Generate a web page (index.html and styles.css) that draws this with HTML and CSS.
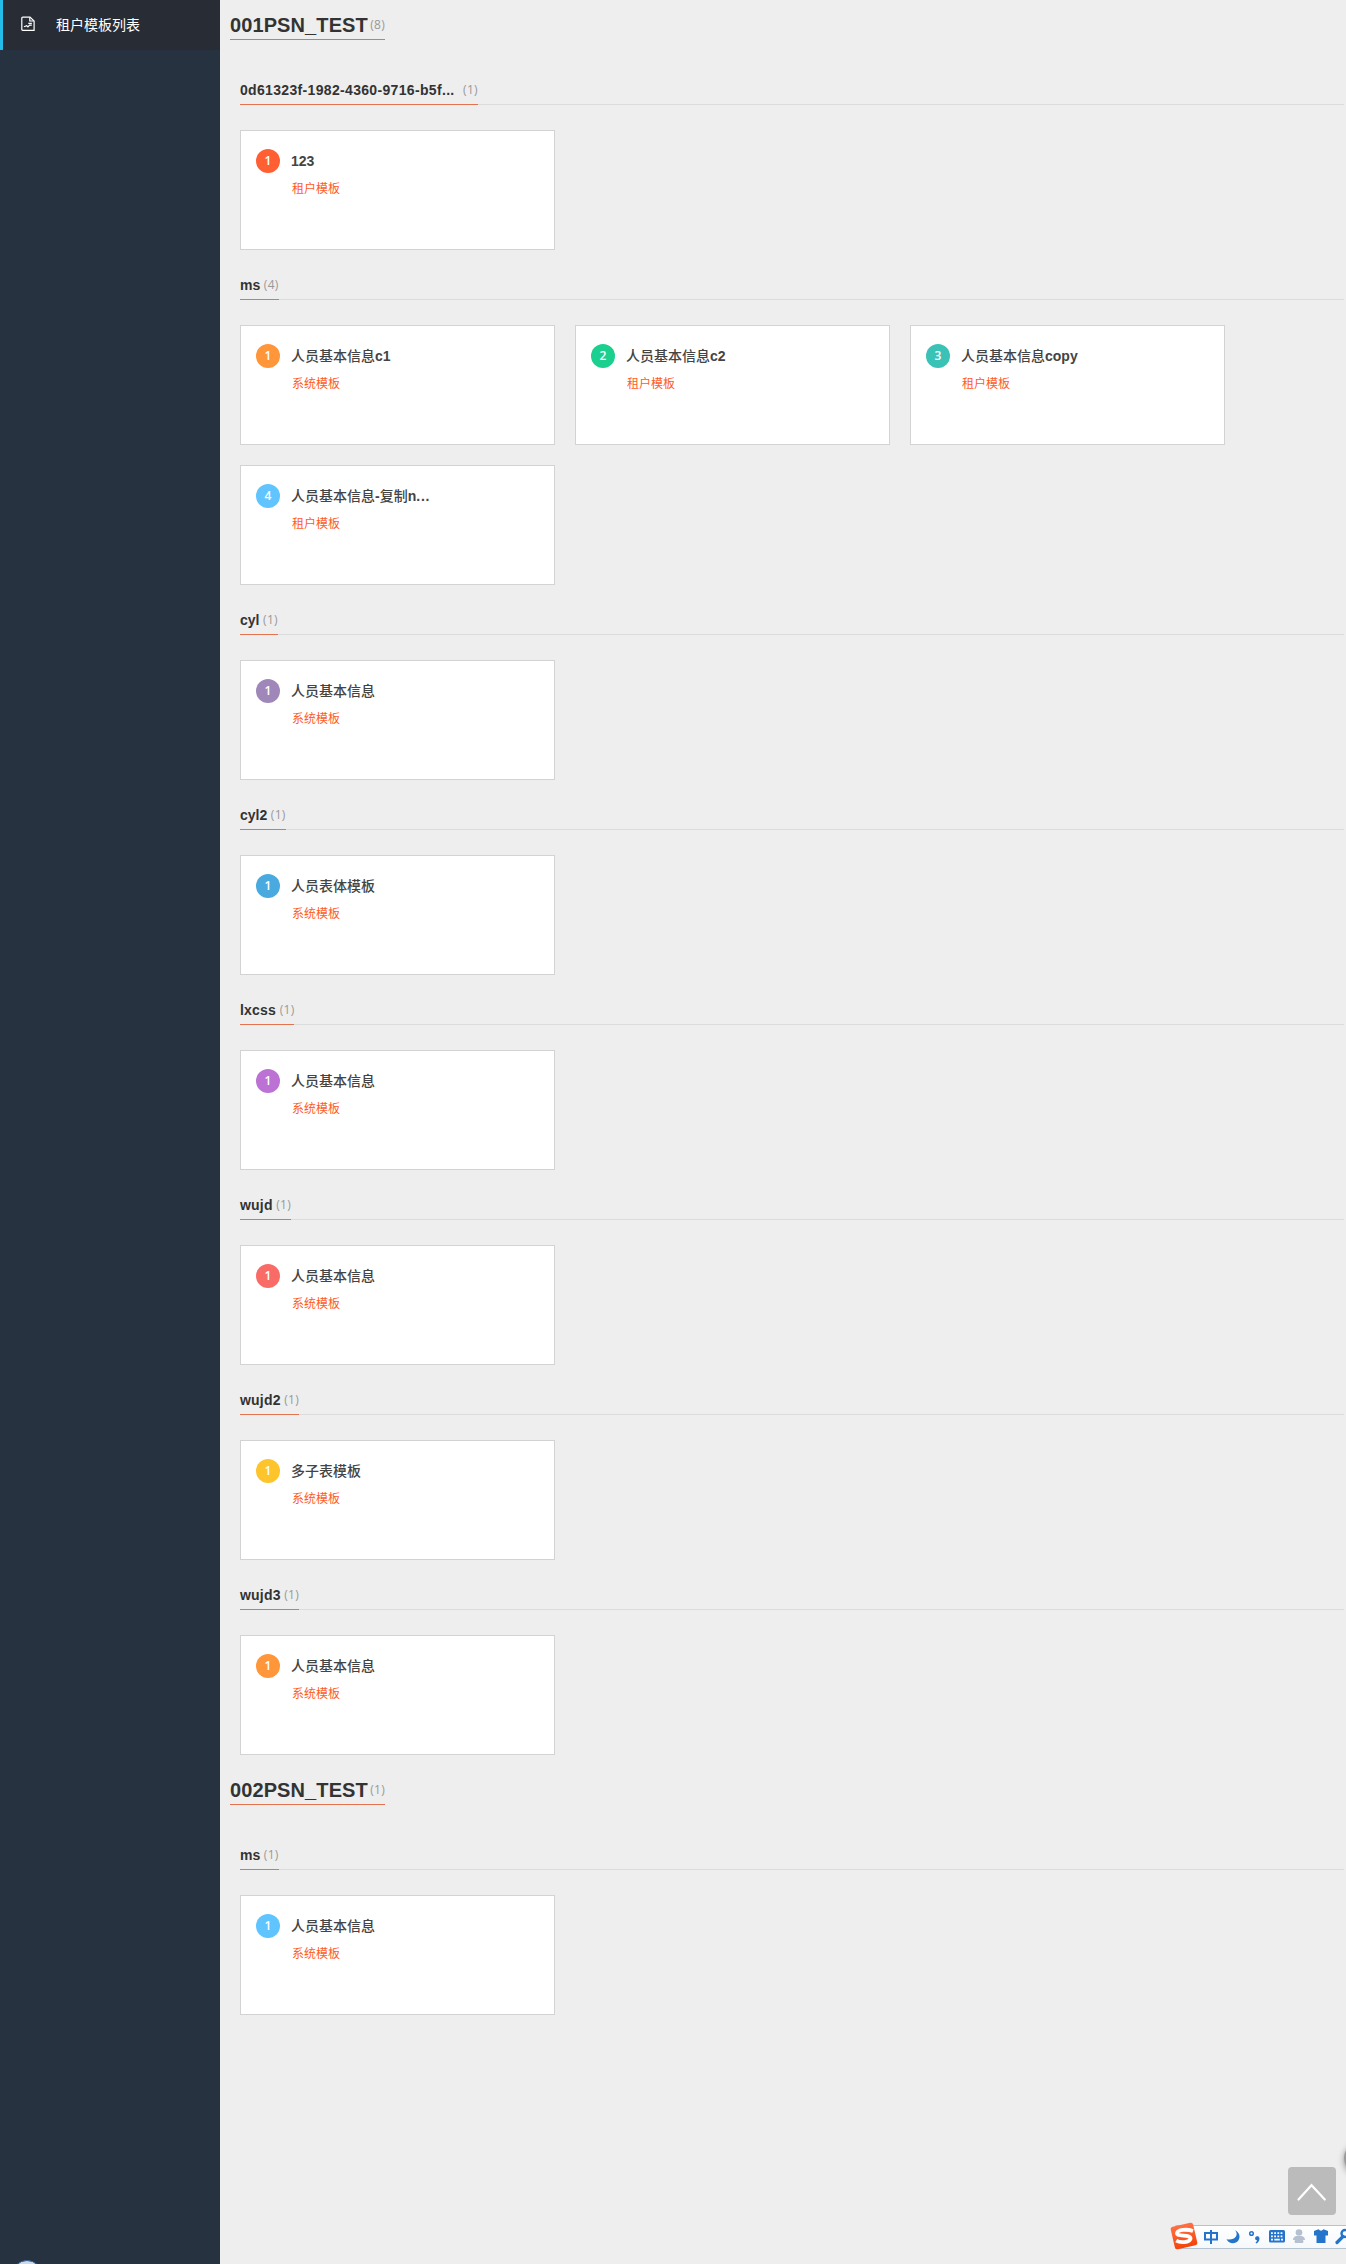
FILE: index.html
```html
<!DOCTYPE html>
<html lang="zh-CN">
<head>
<meta charset="utf-8">
<title>租户模板列表</title>
<link rel="stylesheet" href="styles.css">
</head>
<body>
<div class="app">
  <aside class="sidebar">
    <a class="nav-item">
      <svg class="nav-icon" width="14" height="16" viewBox="0 0 14 16" fill="none" stroke="#fff" stroke-width="1.2">
        <path d="M1.8 1.1H9L13.1 5v9.3H1.8Q.8 14.3.8 13.3V2.1Q.8 1.1 1.8 1.1Z"/>
        <path d="M8.8 1.2V5h4"/>
        <path d="M7.3 7.4h3.5M3 10.8l2.7-1.1 1.2 1.2 1.7-1.8h2.2"/>
      </svg>
      <span>租户模板列表</span>
    </a>
    <span class="status-orb"></span>
  </aside>
  <main class="content">
    <section class="module">
      <h1 class="module-title"><span>001PSN_TEST</span><small class="count">(8)</small></h1>
      <div class="group">
        <h2 class="group-head"><span class="group-label"><span class="group-name long">0d61323f-1982-4360-9716-b5f...</span><small class="count">(1)</small></span></h2>
        <div class="cards">
          <article class="card"><i class="badge flame">1</i><div><h3>123</h3><p>租户模板</p></div></article>
        </div>
      </div>
      <div class="group">
        <h2 class="group-head"><span class="group-label"><span class="group-name">ms</span><small class="count">(4)</small></span></h2>
        <div class="cards">
          <article class="card"><i class="badge orange">1</i><div><h3><b>人员基本信息</b>c1</h3><p>系统模板</p></div></article>
          <article class="card"><i class="badge green">2</i><div><h3><b>人员基本信息</b>c2</h3><p>租户模板</p></div></article>
          <article class="card"><i class="badge teal">3</i><div><h3><b>人员基本信息</b>copy</h3><p>租户模板</p></div></article>
          <article class="card"><i class="badge sky">4</i><div><h3><b>人员基本信息</b>-<b>复制</b>n<span class="dots">...</span></h3><p>租户模板</p></div></article>
        </div>
      </div>
      <div class="group">
        <h2 class="group-head"><span class="group-label"><span class="group-name">cyl</span><small class="count">(1)</small></span></h2>
        <div class="cards">
          <article class="card"><i class="badge mauve">1</i><div><h3><b>人员基本信息</b></h3><p>系统模板</p></div></article>
        </div>
      </div>
      <div class="group">
        <h2 class="group-head"><span class="group-label"><span class="group-name">cyl2</span><small class="count">(1)</small></span></h2>
        <div class="cards">
          <article class="card"><i class="badge blue">1</i><div><h3><b>人员表体模板</b></h3><p>系统模板</p></div></article>
        </div>
      </div>
      <div class="group">
        <h2 class="group-head"><span class="group-label"><span class="group-name wide">lxcss</span><small class="count">(1)</small></span></h2>
        <div class="cards">
          <article class="card"><i class="badge violet">1</i><div><h3><b>人员基本信息</b></h3><p>系统模板</p></div></article>
        </div>
      </div>
      <div class="group">
        <h2 class="group-head"><span class="group-label"><span class="group-name wide">wujd</span><small class="count">(1)</small></span></h2>
        <div class="cards">
          <article class="card"><i class="badge coral">1</i><div><h3><b>人员基本信息</b></h3><p>系统模板</p></div></article>
        </div>
      </div>
      <div class="group">
        <h2 class="group-head"><span class="group-label"><span class="group-name wide">wujd2</span><small class="count">(1)</small></span></h2>
        <div class="cards">
          <article class="card"><i class="badge yellow">1</i><div><h3><b>多子表模板</b></h3><p>系统模板</p></div></article>
        </div>
      </div>
      <div class="group">
        <h2 class="group-head"><span class="group-label"><span class="group-name wide">wujd3</span><small class="count">(1)</small></span></h2>
        <div class="cards">
          <article class="card"><i class="badge orange">1</i><div><h3><b>人员基本信息</b></h3><p>系统模板</p></div></article>
        </div>
      </div>
    </section>
    <section class="module">
      <h1 class="module-title"><span>002PSN_TEST</span><small class="count">(1)</small></h1>
      <div class="group">
        <h2 class="group-head"><span class="group-label"><span class="group-name">ms</span><small class="count">(1)</small></span></h2>
        <div class="cards">
          <article class="card"><i class="badge sky">1</i><div><h3><b>人员基本信息</b></h3><p>系统模板</p></div></article>
        </div>
      </div>
    </section>
  </main>
</div>

<span class="edge-bubble"></span>
<a class="to-top">
  <svg width="48" height="48" viewBox="0 0 48 48" fill="none" stroke="#fff" stroke-width="2.2" stroke-linecap="round"><path d="M10.5 32.5L23.5 18.2L36.8 32.5"/></svg>
</a>

<div class="ime-bar">
  <svg width="176" height="30" viewBox="0 0 176 30">
    <defs>
      <linearGradient id="flame" x1="0" y1="0" x2="0" y2="1"><stop offset="0" stop-color="#ff7046"/><stop offset="1" stop-color="#f54408"/></linearGradient>
      <linearGradient id="bar" x1="0" y1="0" x2="0" y2="1"><stop offset="0" stop-color="#fff"/><stop offset="1" stop-color="#f5f8fb"/></linearGradient>
    </defs>
    <rect x="6" y="4.5" width="180" height="23" fill="url(#bar)" stroke="#b4c3d0"/>
    <rect x="2.500" y="3.5" width="23" height="23" rx="2.5" fill="url(#flame)" transform="rotate(-13 14 15)"/>
    <path d="M23 9C17 6.8 7.500 7.500 7 11.200C6.700 15.200 21 12 20.500 16.800C19.500 20.800 10 20.800 6.200 18.600" fill="none" stroke="#fff" stroke-width="3.800" transform="translate(0 1)"/>
    <g transform="translate(-1 0)">
    <g fill="none" stroke="#2474cb" stroke-width="2">
      <path d="M36 12h12v6.500H36zM42 9v14"/>
      <circle cx="82.500" cy="12.500" r="1.800" stroke-width="1.500"/>
    </g>
    <path d="M66 9.300C70.500 14 65.500 20 57.500 18.300C60 23.200 66.500 23.500 69.300 19.500C72 15.500 70 11 66 9.300Z" fill="#2474cb"/>
    <path d="M87 15.500Q90.500 14.500 90.500 17.500Q90.300 21 87.300 22.500L86.500 21.500Q88 20.500 88 19.200Q86 19.200 86 17Z" fill="#2474cb"/>
    <rect x="100" y="9" width="16" height="12.500" rx="1.500" fill="#2474cb"/>
    <g stroke="#fff" stroke-width="1.800"><path d="M102 12.200h12M102 15.300h12" stroke-dasharray="1.800 1.400"/><path d="M102 18.600h2M105.300 18.600h5.500M112 18.600h2"/></g>
    <g fill="#b5c1d1"><circle cx="130" cy="11.500" r="3.300"/><path d="M127 15h6q3 1 3 4h-2q1 1.500 0 3h-8q-1-1.500 0-3h-2q0-3 3-4Z"/></g>
    <path d="M145 10L149.500 8.300Q152 11 154.500 8.300L159 10V14.500H156.500V22H147.500V14.500H145Z" fill="#2474cb"/>
    <path d="M168 21.500L174 15.500" stroke="#2474cb" stroke-width="3.200" stroke-linecap="round"/>
    <circle cx="176" cy="12.500" r="3.500" fill="none" stroke="#2474cb" stroke-width="2.400"/>
    </g>
  </svg>
</div>
</body>
</html>
```
FILE: styles.css
```css
* { box-sizing: border-box; }
html, body { margin: 0; height: 2264px; overflow: hidden; }
body {
  position: relative;
  width: 1346px;
  background: #eee;
  color: #333;
  font-family: "Liberation Sans", "Noto Sans CJK SC", sans-serif;
}
h1, h2, h3, p { margin: 0; }
.app { display: flex; height: 2264px; }

.sidebar {
  position: relative;
  flex: 0 0 220px;
  background: #263240;
  overflow: hidden;
}
.nav-item {
  display: flex;
  align-items: center;
  gap: 21px;
  height: 50px;
  padding-left: 18px;
  border-left: 3px solid #23bbe8;
  background: #272c35;
  color: #fff;
  font-size: 14px;
}
.nav-item span { line-height: 20px; }
.nav-icon { margin-top: -2px; }
.status-orb {
  position: absolute;
  left: 12px;
  top: 2260px;
  width: 30px;
  height: 30px;
  border: 1px solid #2f6096;
  border-radius: 50%;
  background: #ccd9ec;
}

.content { flex: 1; padding: 10px 2px 0 10px; }
.module-title {
  display: flex;
  justify-content: space-between;
  width: 155px;
  height: 30px;
  margin-bottom: 35px;
  border-bottom: 1px solid #e3724f;
  font-size: 20px;
  line-height: 31px;
  letter-spacing: .1px;
}
.count {
  font-family: "Open Sans", sans-serif;
  font-size: 12px;
  font-weight: 400;
  letter-spacing: .3px;
  color: #999;
}
.module-title .count { line-height: 29px; }
.group { padding-left: 10px; }
.group-head {
  display: flex;
  height: 30px;
  margin-bottom: 25px;
  border-bottom: 1px solid #dcdcdc;
  font-size: 14px;
  line-height: 30px;
}
.group-label {
  display: flex;
  gap: 3.6px;
  height: 30px;
  border-bottom: 1px solid #e3724f;
}
.group-name.wide { letter-spacing: .2px; }
.group-name.long { width: 219.500px; letter-spacing: .33px; }
.cards { display: flex; flex-wrap: wrap; }
.card {
  display: flex;
  gap: 11px;
  width: 315px;
  height: 120px;
  margin: 0 20px 20px 0;
  padding: 18px 15px;
  border: 1px solid #d3d3d3;
  background: #fff;
}
.card h3 { font-size: 14px; line-height: 24px; color: #444; }
.card h3 b { font-weight: 500; }
.dots { letter-spacing: .8px; }
.card p { margin: 5px 0 0 1px; font-size: 12px; line-height: 23px; color: #ff5a1f; }
.badge {
  width: 24px;
  height: 24px;
  border-radius: 50%;
  color: #fff;
  font: 600 12px/24px "Open Sans", sans-serif;
  text-align: center;
}
.flame { background: #ff5f33; }
.orange { background: #ff963a; }
.green { background: #1bd08f; }
.teal { background: #3bc2b7; }
.sky { background: #60c4ff; }
.mauve { background: #9f88b9; }
.blue { background: #4aaadf; }
.violet { background: #bb72d4; }
.coral { background: #f96b67; }
.yellow { background: #fdc42b; }

.to-top {
  position: absolute;
  left: 1288px;
  top: 2167px;
  width: 48px;
  height: 48px;
  border-radius: 4px;
  background: #bbb;
}
.edge-bubble {
  position: absolute;
  left: 1344px;
  top: 2142px;
  width: 32px;
  height: 32px;
  border-radius: 50%;
  background: #999;
  box-shadow: 0 2px 6px rgba(0, 0, 0, .4);
}
.ime-bar { position: absolute; left: 1170px; top: 2221px; width: 176px; height: 30px; }
```
